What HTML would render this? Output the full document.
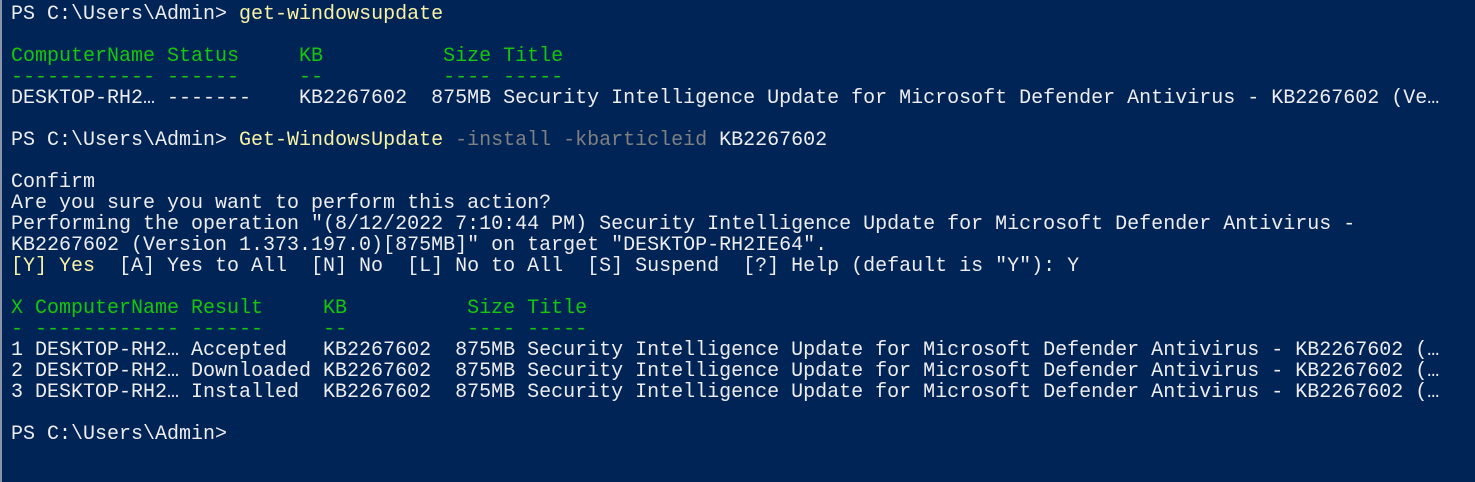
<!DOCTYPE html>
<html><head><meta charset="utf-8"><style>
html,body{margin:0;padding:0;}
body{width:1475px;height:482px;background:#012456;overflow:hidden;position:relative;}
.b{position:absolute;left:0;top:0;width:2px;height:482px;background:#8a93a8;}
pre{margin:0;position:absolute;left:11px;top:4px;font-family:"Liberation Mono",monospace;font-size:20px;line-height:21px;color:#eeedf0;white-space:pre;letter-spacing:0;}
.g{color:#16c60c}.y{color:#f9f1a5}.d{color:#808080}
</style></head><body><div class="b"></div><pre>PS C:\Users\Admin&gt; <span class="y">get-windowsupdate</span>

<span class="g">ComputerName Status     KB          Size Title</span>
<span class="g">------------ ------     --          ---- -----</span>
DESKTOP-RH2… -------    KB2267602  875MB Security Intelligence Update for Microsoft Defender Antivirus - KB2267602 (Ve…

PS C:\Users\Admin&gt; <span class="y">Get-WindowsUpdate</span> <span class="d">-install -kbarticleid</span> KB2267602

Confirm
Are you sure you want to perform this action?
Performing the operation "(8/12/2022 7:10:44 PM) Security Intelligence Update for Microsoft Defender Antivirus -
KB2267602 (Version 1.373.197.0)[875MB]" on target "DESKTOP-RH2IE64".
<span class="y">[Y] Yes</span>  [A] Yes to All  [N] No  [L] No to All  [S] Suspend  [?] Help (default is "Y"): Y

<span class="g">X ComputerName Result     KB          Size Title</span>
<span class="g">- ------------ ------     --          ---- -----</span>
1 DESKTOP-RH2… Accepted   KB2267602  875MB Security Intelligence Update for Microsoft Defender Antivirus - KB2267602 (…
2 DESKTOP-RH2… Downloaded KB2267602  875MB Security Intelligence Update for Microsoft Defender Antivirus - KB2267602 (…
3 DESKTOP-RH2… Installed  KB2267602  875MB Security Intelligence Update for Microsoft Defender Antivirus - KB2267602 (…

PS C:\Users\Admin&gt;</pre></body></html>
